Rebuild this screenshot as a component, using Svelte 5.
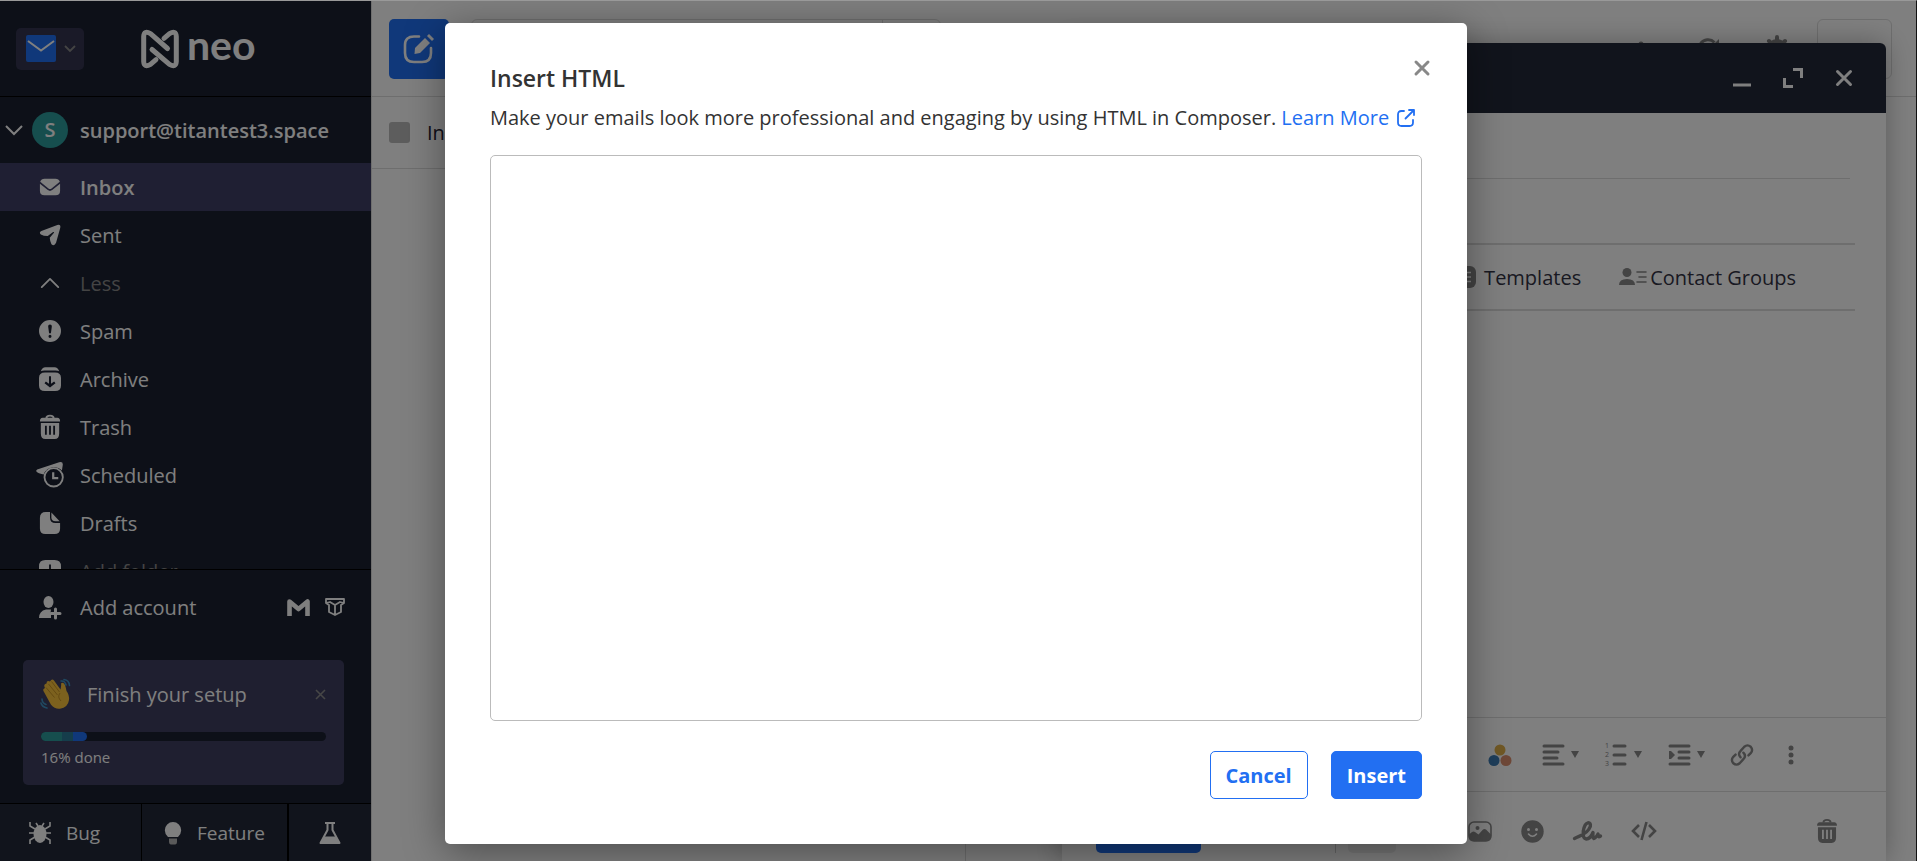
<script lang="ts">
  const folders = [
    {
      name: 'Inbox',
      active: true,
      icon: '<path fill="currentColor" d="M1 8.5 9.6 15.4q2.4 1.8 4.8 0L23 8.5V16q0 5-5 5H6q-5 0-5-5z"/><path fill="currentColor" d="M6 3h12q3.6 0 4.7 3.2l-9 7.3q-1.700 1.200-3.400 0l-9-7.300Q2.400 3 6 3z"/>'
    },
    {
      name: 'Sent',
      icon: '<path fill="currentColor" d="M2.600 7.600 20 1q4-1 3.200 3.200L18.600 20.500q-2 4.500-5 1.500-1.600-3-1.900-7l4.600-5.400q.4-1.200-.9-.8L9.500 13.200Q5 13 2 11.400-.4 9 2.600 7.600z"/>'
    },
    {
      name: 'Less',
      muted: true,
      icon: '<path fill="none" stroke="currentColor" stroke-width="2" stroke-linecap="round" stroke-linejoin="round" d="m3 16.500 9-9 9 9"/>'
    },
    {
      name: 'Spam',
      icon: '<path fill="currentColor" fill-rule="evenodd" d="M12 0a12 12 0 1 1 0 24 12 12 0 0 1 0-24zm0 5q-2.200 0-2 2.200l.9 6.300q.200 1.200 1.100 1.200t1.100-1.200l.9-6.300Q14.200 5 12 5zm0 11.200a1.600 1.600 0 1 0 0 3.300 1.600 1.600 0 0 0 0-3.300z"/>'
    },
    {
      name: 'Archive',
      icon: '<path fill="currentColor" d="M2 3.500Q3.500-.8 7-.8h10q3.500 0 5 4.300-1.500-.7-4-.7H6q-2.500 0-4 .7z"/><path fill="currentColor" fill-rule="evenodd" d="M6.500 5h11Q24 5 24 11v8q0 6-6.500 6h-11Q0 25 0 19v-8q0-6 6.500-6zm4.400 4v8.200l-3.400-2.600-1.500 1.900 6 4.700 6-4.700-1.500-1.900-3.400 2.600V9z"/>'
    },
    {
      name: 'Trash',
      icon: '<path fill="none" stroke="currentColor" stroke-width="2" d="M8 2.500Q8-.5 12-.5t4 3"/><path fill="currentColor" d="M4 2h16q3 0 3 4H1q0-4 3-4z"/><path fill="currentColor" fill-rule="evenodd" d="M2 7.500h20V19q0 6-5 6H7q-5 0-5-6zm4.500 3v10h2v-10zm4.500 0v10h2v-10zm4.500 0v10h2v-10z"/>'
    },
    {
      name: 'Scheduled',
      icon: '<path fill="currentColor" d="M-2 6 22-2q4-1 4 2.500L25 7q-4-3.800-9.500-3.500Q8 4 5 11.500L0 10q-5-2-2-4z"/><circle cx="16" cy="14.500" r="10" fill="none" stroke="currentColor" stroke-width="2"/><path fill="none" stroke="currentColor" stroke-width="2.400" d="M15.500 9v6.500H21"/>'
    },
    {
      name: 'Drafts',
      icon: '<path fill="currentColor" d="M7.500 0H12v6q0 6 6 6h5v6q0 6-6 6H7q-6 0-6-6V6.500Q1 0 7.500 0z"/><path fill="currentColor" d="M13.500.5 22.500 10H18q-4.500 0-4.500-4z"/>'
    },
    {
      name: 'Add folder',
      muted: true,
      icon: '<path fill="currentColor" fill-rule="evenodd" d="M7 0h10q7 0 7 7v10q0 7-7 7H7q-7 0-7-7V7q0-7 7-7zm4 5v6H5v2h6v6h2v-6h6v-2h-6V5z"/>'
    }
  ];

  const formatTools = [
    {
      label: 'Alignment',
      icon: '<path stroke="currentColor" stroke-width="3" stroke-linecap="round" d="M2 2h19M2 8h14M2 14h13M2 20h19"/>'
    },
    {
      label: 'Numbered list',
      icon: '<path stroke="currentColor" stroke-width="3" stroke-linecap="round" d="M9 2h11M9 11h11M9 20h11"/><text x="0" y="4" font-size="7" fill="currentColor">1</text><text x="0" y="13" font-size="7" fill="currentColor">2</text><text x="0" y="22" font-size="7" fill="currentColor">3</text>'
    },
    {
      label: 'Indent',
      icon: '<path stroke="currentColor" stroke-width="3" stroke-linecap="round" d="M2 2h19M11 8h10M11 14h10M2 20h19"/><path fill="currentColor" d="M1 7h2l4 4-4 4H1z"/>'
    }
  ];

  const setupProgress = 16;
  let html = $state('');
</script>

<div class="page">
  <aside class="sidebar">
    <header class="brand">
      <button class="app-switch" aria-label="Switch app">
        <svg width="30" height="27" viewBox="0 0 30 27"><rect width="30" height="27" rx="2" fill="#2070f4" /><path d="m2 6 13 9.500L28 6" fill="none" stroke="#fff" stroke-width="2" /></svg>
        <svg width="12" height="8" viewBox="0 0 12 8"><path d="m1 1 5 5 5-5" fill="none" stroke="#888" stroke-width="1.800" /></svg>
      </button>
      <div class="logo">
        <svg width="38" height="38" viewBox="0 0 38 38" fill="none" stroke="#fff" stroke-width="5" stroke-linecap="round" stroke-linejoin="round">
          <path d="M26.500 18.500 9.500 3.700Q3 0 2.700 6.500v25Q3 38 9.500 34.300L15 29.700" />
          <path d="m11 19.500 17.500 14.800Q35 38 35.300 31.500v-25Q35 0 28.500 3.700L23 8.300" />
        </svg>
        <span>neo</span>
      </div>
    </header>

    <nav class="folders">
      <button class="account">
        <svg width="18" height="12" viewBox="0 0 18 12"><path d="m1 2 8 8 8-8" fill="none" stroke="#fff" stroke-width="2" /></svg>
        <span class="avatar">S</span>
        <span>support@titantest3.space</span>
      </button>
      {#each folders as folder}
        <a href="#{folder.name}" class="folder" class:active={folder.active} class:muted={folder.muted}>
          <svg width="22" height="22" viewBox="0 0 24 24">{@html folder.icon}</svg>
          <span>{folder.name}</span>
        </a>
      {/each}
    </nav>

    <div class="add-account">
      <button>
        <svg width="22" height="22" viewBox="0 0 22 22" fill="currentColor"><ellipse cx="9.500" cy="6" rx="5" ry="6" /><path d="M0 22q0-7 7-8.500h5q-1 3.500 0 5.500v3z" /><path d="M16.500 13v9M12 17.500h9" stroke="currentColor" stroke-width="3" stroke-linecap="round" /></svg>
        <span>Add account</span>
      </button>
      <svg width="23" height="17" viewBox="0 0 23 17"><path d="M2.500 17V2.500l9 7.500 9-7.500V17" fill="none" stroke="#fff" stroke-width="4.600" stroke-linejoin="round" /></svg>
      <svg width="20" height="18" viewBox="0 0 20 18" fill="none" stroke="#fff" stroke-width="1.800" stroke-linejoin="round"><path d="M1 1h18v4l-3 2v7l-6 3-6-3V7L1 5zM1 5l4-1 5 3 5-3 4 1M10 7v10" /></svg>
    </div>

    <section class="setup">
      <div class="setup-head">
        <svg width="30" height="30" viewBox="0 0 30 30">
          <path d="M3 13q-2-3 1-4l-.5-1q-1-3 2-3.500 0-3.500 3.500-2Q11-1 13 1.500l6.500 9q1-5 .5-6 2-2 4 1.500 1 3 1.500 6 3 4 2.500 9-1 7.500-9 8.700-5 .7-9-4z" fill="#f9c23c" />
          <path d="m5 8.500 8.500 10M7.500 5l9 11M10.500 2.500l8 10.500M19 14q-3 4 1 8" fill="none" stroke="#c99525" stroke-width="1" />
          <path d="M20 2q4-.5 5 4M23 .5q5 .5 5.500 6M1 20q0 4 4 5.500M0 24q1 4 6 5" fill="none" stroke="#3f93c4" stroke-width="1.600" stroke-linecap="round" />
        </svg>
        <span>Finish your setup</span>
        <button aria-label="Dismiss setup">
          <svg width="11" height="11" viewBox="0 0 11 11"><path d="m1 1 9 9M10 1l-9 9" stroke="#8d8d8d" stroke-width="1.600" /></svg>
        </button>
      </div>
      <div class="progress"><div class="bar" style="width: {setupProgress}%"></div></div>
      <p>{setupProgress}% done</p>
    </section>

    <footer class="feedback">
      <button class="bug">
        <svg width="22" height="22" viewBox="0 0 22 22"><ellipse cx="11" cy="12" rx="6.500" ry="9" fill="currentColor" /><path d="M1 0v4l5 3M21 0v4l-5 3M0 11h22M1 22v-4l5-3M21 22v-4l-5-3M7 1l2 3M15 1l-2 3" fill="none" stroke="currentColor" stroke-width="1.600" /></svg>
        <span>Bug</span>
      </button>
      <button class="feature">
        <svg width="18" height="24" viewBox="0 0 18 24"><path d="M9 1a8.200 8.200 0 0 1 8.200 8.300q0 3.700-3.200 6.700H4Q.8 13 .8 9.300A8.200 8.200 0 0 1 9 1z" fill="currentColor" /><path d="M5 17.500h8v3q0 3-2 3H7q-2 0-2-3z" fill="#b5b5b5" /></svg>
        <span>Feature</span>
      </button>
      <button class="labs" aria-label="Labs">
        <svg width="22" height="24" viewBox="0 0 22 24"><path d="M6 2h10M8.500 2v7L1.500 22h19L13.500 9V2" fill="none" stroke="currentColor" stroke-width="2" stroke-linejoin="round" /><path d="M5.500 15.500h11l4 7h-19z" fill="currentColor" /></svg>
      </button>
    </footer>
  </aside>

  <main class="mail">
    <div class="topbar">
      <button class="compose-btn" aria-label="Compose">
        <svg width="32" height="32" viewBox="0 0 32 32"><path d="M16 3.500h-5Q2 3.500 2 12v8q0 9 9 9h8q9 0 9-9v-5" fill="none" stroke="#fff" stroke-width="2.600" stroke-linecap="round" /><path d="M12 15 22 5l5 5-10 10-5.500 1z" fill="#fff" /><path d="m24 3 2-2 5 5-2 2z" fill="#fff" /></svg>
      </button>
      <div class="search">
        <input type="search" aria-label="Search mail" />
        <button aria-label="Search filters"></button>
      </div>
      <div class="top-actions">
        <svg width="22" height="22" viewBox="0 0 22 22"><circle cx="11" cy="6" r="2.500" /><path d="M3 18q2-2 2-7 1-5 6-5t6 5q0 5 2 7z" /></svg>
        <svg width="24" height="24" viewBox="0 0 24 24"><path d="M21 13a9 9 0 1 1-2.500-7.500" fill="none" stroke="#888" stroke-width="3" /><path d="M23 2v8h-8z" /></svg>
        <svg width="26" height="26" viewBox="0 0 26 26"><circle cx="13" cy="13" r="8" fill="none" stroke="#888" stroke-width="4" /><path d="M13 1v5M13 20v5M1 13h5M20 13h5M5 5l3 3M18 18l3 3M21 5l-3 3M8 18l-3 3" stroke="#888" stroke-width="4" stroke-linecap="round" /></svg>
      </div>
      <button class="profile" aria-label="Profile"></button>
    </div>
    <div class="list">
      <label class="list-head">
        <input type="checkbox" />
        <span>Inbox</span>
      </label>
    </div>
  </main>

  <section class="composer" aria-label="New message">
    <header>
      <button aria-label="Minimize"><svg width="20" height="20" viewBox="0 0 20 20"><path d="M1 17h18" stroke="#fff" stroke-width="3" /></svg></button>
      <button aria-label="Expand"><svg width="20" height="20" viewBox="0 0 20 20"><path d="M10 1.500h8.500V10M1.500 10v8.500H10" fill="none" stroke="#fff" stroke-width="3" /></svg></button>
      <button aria-label="Close composer"><svg width="20" height="20" viewBox="0 0 20 20"><path d="m3.500 3.500 13 13M16.500 3.500l-13 13" stroke="#fff" stroke-width="3" stroke-linecap="round" /></svg></button>
    </header>
    <input class="to" aria-label="To" />
    <input class="subject" aria-label="Subject" />
    <div class="inserts">
      <button>
        <svg width="22" height="22" viewBox="0 0 22 22"><rect width="22" height="22" rx="6" fill="#888" /><path d="M5 6.500h12M5 11h12M5 15.500h12" stroke="#fff" stroke-width="1.500" /></svg>
        Templates
      </button>
      <button class="groups">
        <svg width="28" height="18" viewBox="0 0 28 18" fill="#888"><circle cx="8" cy="4.500" r="4.500" /><path d="M0 17q0-6 8-6t8 6z" /><path d="M18 4h9M20 9h7M18 14h9" stroke="#888" stroke-width="1.600" stroke-linecap="round" /></svg>
        Contact Groups
      </button>
    </div>
    <div class="body"></div>
    <div class="tools">
      <button class="palette" aria-label="Text colour">
        <svg width="22" height="22" viewBox="0 0 22 22"><circle cx="11" cy="6" r="5.500" fill="#e0b04a" /><circle cx="5" cy="16.500" r="5.500" fill="#3e7db5" /><circle cx="17" cy="16.500" r="5.500" fill="#dd9070" /></svg>
      </button>
      {#each formatTools as tool}
        <button class="dropdown" aria-label={tool.label}>
          <svg width="23" height="24" viewBox="0 -1 23 24">{@html tool.icon}</svg>
          <svg width="8" height="7" viewBox="0 0 8 7"><path d="M0 0h8L4 7z" fill="currentColor" /></svg>
        </button>
      {/each}
      <button aria-label="Link">
        <svg width="22" height="22" viewBox="0 0 24 24" fill="none" stroke="currentColor" stroke-width="2.600" stroke-linecap="round"><path d="M10.500 14.500q-3.500-3.500 0-7l4-4.500q3.500-3 7 0 3 3.500 0 7L19 12.500" /><path d="M13.500 9.500q3.500 3.500 0 7l-4 4.500q-3.500 3-7 0-3-3.500 0-7L5 11.500" /></svg>
      </button>
      <button class="more" aria-label="More formatting">
        <svg width="6" height="20" viewBox="0 0 6 20" fill="currentColor"><circle cx="3" cy="3" r="2.500" /><circle cx="3" cy="10" r="2.500" /><circle cx="3" cy="17" r="2.500" /></svg>
      </button>
    </div>
    <footer class="send-row">
      <button class="send" aria-label="Send"></button>
      <span class="divider"></span>
      <button class="attach" aria-label="Attach"></button>
      <div class="media">
        <button aria-label="Image"><svg width="24" height="21" viewBox="0 0 24 21"><rect x="1" y="1" width="22" height="19" rx="5" fill="none" stroke="currentColor" stroke-width="1.600" /><circle cx="9.500" cy="7" r="2" fill="currentColor" /><path d="M1 13.500 4 11q1.500-1 3 0l3.500 2.500 4.500-5q1.500-1.200 3 0l5 5V16q0 4-4 4H5q-4 0-4-4z" fill="currentColor" /></svg></button>
        <button aria-label="Emoji"><svg width="23" height="23" viewBox="0 0 23 23"><circle cx="11.500" cy="11.500" r="11.200" fill="currentColor" /><circle cx="7.500" cy="9.500" r="1.500" fill="#fff" /><circle cx="15.500" cy="9.500" r="1.500" fill="#fff" /><path d="M7.500 14q4 4.500 8 0" fill="none" stroke="#fff" stroke-width="1.600" stroke-linecap="round" /></svg></button>
        <button aria-label="Signature"><svg width="29" height="20" viewBox="0 0 29 20"><path d="M1.500 17.500 5 15.800Q15 12 17.300 5.500 18 1.700 15 1.800 11.500 2.500 10.300 10q-.8 7.500 3 8 4 0 6.700-6.500-.5 5.500.7 6 1.500.3 4.300-4.500-.3 4 2.500 2" fill="none" stroke="currentColor" stroke-width="3.400" stroke-linecap="round" stroke-linejoin="round" /></svg></button>
        <button aria-label="Insert HTML"><svg width="26" height="20" viewBox="0 0 26 20" fill="none" stroke="currentColor" stroke-width="2.600"><path d="m8 4-6 6 6 6M18 4l6 6-6 6M15.500 1l-5 18" /></svg></button>
      </div>
      <button aria-label="Discard"><svg width="20" height="24" viewBox="1 -1.500 22 26.500">{@html folders[5].icon}</svg></button>
    </footer>
  </section>

  <div class="overlay">
    <div class="modal" role="dialog" aria-labelledby="modal-title">
      <button class="close" aria-label="Close">
        <svg width="16" height="16" viewBox="0 0 16 16"><path d="m2 2 12 12M14 2 2 14" stroke="#888" stroke-width="3" stroke-linecap="round" /></svg>
      </button>
      <h2 id="modal-title">Insert HTML</h2>
      <p>
        Make your emails look more professional and engaging by using HTML in Composer.
        <a href="#learn-more">Learn More
          <svg width="18" height="18" viewBox="0 0 18 18" fill="none" stroke="currentColor" stroke-width="1.800" stroke-linecap="round" stroke-linejoin="round"><path d="M7 2H4.500Q1 2 1 5.500v8Q1 17 4.500 17h8q3.500 0 3.500-3.500V11M12 1h5v5M17 1 8.500 9.500" /></svg>
        </a>
      </p>
      <textarea aria-labelledby="modal-title" bind:value={html}></textarea>
      <div class="modal-actions">
        <button class="cancel">Cancel</button>
        <button class="insert">Insert</button>
      </div>
    </div>
  </div>
</div>

<style>
  :global(body) {
    margin: 0;
    overflow: hidden;
  }

  .page {
    position: relative;
    display: flex;
    height: 100vh;
    box-sizing: border-box;
    border-top: 1px solid #999;
    border-right: 1px solid #111;
    overflow: hidden;
    background: #fff;
    color: #333;
    font-family: 'Open Sans', 'Noto Sans', sans-serif;
    font-size: 20px;
  }

  svg {
    display: block;
    flex-shrink: 0;
    overflow: visible;
  }

  button {
    display: flex;
    align-items: center;
    padding: 0;
    border: 0;
    background: none;
    color: inherit;
    font: inherit;
    cursor: pointer;
  }

  input {
    border: 0;
    padding: 0;
    background: none;
    font: inherit;
  }

  /* sidebar */
  .sidebar {
    display: flex;
    flex-direction: column;
    flex: 0 0 371px;
    background: #1a2030;
    color: #fff;
  }

  .brand {
    display: flex;
    align-items: center;
    gap: 57px;
    height: 95px;
    padding-left: 16px;
    border-bottom: 1px solid #000;
  }

  .app-switch {
    gap: 8px;
    height: 42px;
    padding: 0 8px 0 10px;
    border-radius: 5px;
    background: #343450;
  }

  .logo {
    display: flex;
    align-items: center;
    gap: 8px;
    font-family: Lato, sans-serif;
    font-size: 41px;
    font-weight: 700;
    line-height: 38px;
  }

  .logo span {
    padding-bottom: 8px;
  }

  .folders {
    flex: 1;
    min-height: 0;
    overflow: hidden;
  }

  .account {
    width: 100%;
    height: 66px;
    padding-left: 5px;
    font-weight: 600;
  }

  .avatar {
    width: 36px;
    margin: 0 12px 0 9px;
    border-radius: 50%;
    background: #2c9c9c;
    line-height: 36px;
    text-align: center;
  }

  .folder {
    display: flex;
    align-items: center;
    gap: 19px;
    height: 48px;
    padding-left: 39px;
    color: #fff;
    text-decoration: none;
  }

  .folder.active {
    background: #3e3e66;
    font-weight: 600;
  }

  .folder.muted span {
    color: #888;
  }

  .add-account {
    display: flex;
    align-items: center;
    gap: 15px;
    height: 74px;
    padding: 0 26px 0 39px;
    border-top: 1px solid #000;
  }

  .add-account button {
    flex: 1;
    gap: 19px;
  }

  .setup {
    margin: 16px 27px 18px 23px;
    padding: 18px;
    border-radius: 5px;
    background: #3e3e60;
  }

  .setup-head {
    display: flex;
    align-items: center;
    gap: 16px;
    height: 32px;
  }

  .setup-head button {
    margin-left: auto;
  }

  .progress {
    height: 9px;
    margin: 22px 0 6px;
    border-radius: 5px;
    background: #1a2030;
  }

  .bar {
    height: 100%;
    border-radius: 5px;
    background: linear-gradient(90deg, #2c9c9c 0 45%, #2b7a96 45% 70%, #2070f4 70%);
  }

  .setup p {
    margin: 0;
    font-size: 15px;
    line-height: 20px;
  }

  .feedback {
    display: grid;
    grid-template-columns: 142fr 147fr 82fr;
    height: 57px;
    border-top: 1px solid #000;
    background: #222838;
    font-size: 19px;
  }

  .feedback button {
    justify-content: center;
    gap: 15px;
  }

  .bug {
    border-right: 1px solid #000;
    padding-right: 12px;
  }

  .feature {
    border-right: 2px solid #000;
  }

  /* mailbox */
  .mail {
    display: flex;
    flex-direction: column;
    flex: 1;
    border-left: 1px solid #ddd;
  }

  .topbar {
    display: flex;
    align-items: center;
    height: 95px;
    padding: 0 24px 0 17px;
    border-bottom: 1px solid #ddd;
  }

  .compose-btn {
    justify-content: center;
    width: 60px;
    height: 60px;
    border-radius: 5px;
    background: #2070f4;
  }

  .search {
    display: flex;
    width: 468px;
    height: 58px;
    margin-left: 22px;
    border: 1px solid #ddd;
    border-radius: 6px;
  }

  .search input {
    flex: 1;
  }

  .search button {
    width: 58px;
    border-left: 1px solid #ddd;
  }

  .top-actions {
    display: flex;
    align-items: center;
    gap: 44px;
    margin: 0 27px 0 auto;
    fill: #888;
  }

  .profile {
    width: 75px;
    height: 60px;
    border: 1px solid #ddd;
    border-radius: 6px;
  }

  .list {
    flex: 1;
    width: 593px;
    border-right: 1px solid #ddd;
  }

  .list-head {
    display: flex;
    align-items: center;
    gap: 17px;
    height: 71px;
    padding-left: 17px;
    border-bottom: 1px solid #ddd;
    color: #223;
  }

  .list-head input {
    appearance: none;
    width: 21px;
    height: 21px;
    margin: 0;
    border-radius: 3px;
    background: #bbb;
  }

  /* composer window */
  .composer {
    position: absolute;
    top: 42px;
    right: 30px;
    bottom: 0;
    display: flex;
    flex-direction: column;
    width: 43%;
    border-radius: 6px 6px 0 0;
    background: #fff;
    box-shadow: 0 0 28px rgba(0, 0, 0, 0.3);
    color: #888;
  }

  .composer header {
    display: flex;
    align-items: center;
    justify-content: flex-end;
    gap: 31px;
    height: 70px;
    padding-right: 32px;
    border-radius: 6px 6px 0 0;
    background: #222838;
  }

  .to {
    height: 65px;
    margin: 0 36px;
    border-bottom: 1px solid #ddd;
  }

  .subject {
    height: 64px;
    margin: 0 31px;
    border-bottom: 2px solid #ddd;
  }

  .inserts {
    display: flex;
    align-items: center;
    justify-content: flex-end;
    gap: 38px;
    height: 64px;
    margin: 0 31px;
    padding-right: 59px;
    border-bottom: 2px solid #ddd;
    color: #334;
  }

  .inserts button {
    gap: 8px;
  }

  .inserts .groups {
    gap: 3px;
  }

  .body {
    flex: 1;
  }

  .tools {
    display: flex;
    align-items: center;
    justify-content: flex-end;
    gap: 26px;
    height: 73px;
    padding-right: 92px;
    border-top: 1px solid #ddd;
    border-bottom: 1px solid #ddd;
  }

  .palette {
    margin-right: 5px;
  }

  .dropdown {
    gap: 6px;
  }

  .tools .more {
    margin-left: 9px;
  }

  .send-row {
    display: flex;
    align-items: center;
    padding: 17px 49px 8px 34px;
  }

  .send {
    width: 105px;
    height: 44px;
    border-radius: 5px;
    background: #2070f4;
  }

  .divider {
    width: 1px;
    height: 44px;
    margin: 0 12px 0 auto;
    background: #ccc;
  }

  .attach {
    width: 48px;
    height: 44px;
    margin-right: 72px;
    border-radius: 5px;
    background: #eee;
  }

  .media {
    display: flex;
    align-items: center;
    gap: 29px;
    margin-right: 160px;
  }

  /* dialog */
  .overlay {
    position: absolute;
    inset: -1px;
    display: flex;
    justify-content: center;
    padding: 23px 4px 0 0;
    background: rgba(0, 0, 0, 0.5);
  }

  .modal {
    position: relative;
    display: flex;
    flex-direction: column;
    box-sizing: border-box;
    width: 1022px;
    height: calc(100vh - 40px);
    padding: 39px 45px 45px;
    border-radius: 5px;
    background: #fff;
    box-shadow: 0 8px 40px rgba(0, 0, 0, 0.4);
  }

  .close {
    position: absolute;
    top: 37px;
    right: 37px;
  }

  h2 {
    margin: 0;
    font-size: 23px;
    font-weight: 600;
    line-height: 32px;
  }

  .modal p {
    margin: 10px 0 23px;
    font-size: 20px;
    line-height: 28px;
  }

  .modal a {
    color: #226ff2;
    text-decoration: none;
  }

  .modal a svg {
    display: inline-block;
    margin-left: 3px;
    vertical-align: -2px;
  }

  textarea {
    flex: 1;
    border: 1px solid #bbb;
    border-radius: 5px;
    background: #fff;
    resize: none;
  }

  .modal-actions {
    display: flex;
    justify-content: flex-end;
    gap: 23px;
    margin-top: 30px;
  }

  .modal-actions button {
    box-sizing: border-box;
    height: 48px;
    padding: 0 15px;
    border: 1px solid #226ff2;
    border-radius: 5px;
    font-weight: 700;
  }

  .cancel {
    color: #226ff2;
  }

  .insert {
    background: #226ff2;
    color: #fff;
  }
</style>
